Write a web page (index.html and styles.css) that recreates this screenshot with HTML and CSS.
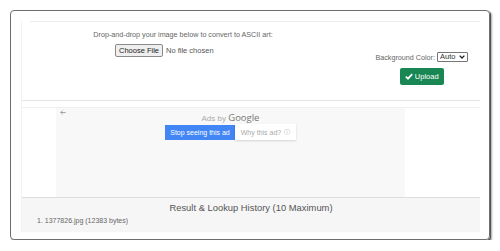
FILE: index.html
```html
<!DOCTYPE html>
<html lang="en">

<head>
    <meta charset="UTF-8">
    <meta name="viewport" content="width=device-width, initial-scale=1.0">
    <title>Image to ASCII</title>
    <link rel="stylesheet" href="styles.css">
</head>

<body>
    <div class="frame">
        <div class="panel">
            <!-- upload form -->
            <section class="upload">
                <div class="upload-left">
                    <p class="hint">Drop-and-drop your image below to convert to ASCII art:</p>
                    <input class="file" type="file">
                </div>
                <div class="upload-right">
                    <label class="bg-color">Background Color:
                        <span class="select-wrap">
                            <select>
                                <option>Auto</option>
                            </select>
                            <svg class="select-arrow" width="6" height="4" viewBox="0 0 6 4"><path d="M0.6 0.6 L3 3 L5.4 0.6" fill="none" stroke="#222" stroke-width="1.3"/></svg>
                        </span>
                    </label>
                    <button class="btn-upload" type="button">
                        <svg width="8" height="7" viewBox="0 0 8 7"><path d="M0.8 3.6 L3 5.7 L7.2 1.2" fill="none" stroke="#fff" stroke-width="1.7"/></svg>
                        Upload
                    </button>
                </div>
            </section>

            <!-- ad slot -->
            <section class="ad-slot">
                <div class="ad-row">
                    <div class="ad">
                        <svg class="ad-back" width="6" height="5" viewBox="0 0 6 5"><path d="M5.6 2.5 H0.8 M2.6 0.6 L0.7 2.5 L2.6 4.4" fill="none" stroke="#999" stroke-width="0.9"/></svg>
                        <div class="ad-by">Ads by <span class="google">Google</span></div>
                        <div class="ad-actions">
                            <span class="ad-stop">Stop seeing this ad</span>
                            <span class="ad-why">Why this ad? <span class="info">&#9432;</span></span>
                        </div>
                    </div>
                </div>
            </section>

            <!-- history -->
            <section class="history">
                <h3>Result &amp; Lookup History (10 Maximum)</h3>
                <ol>
                    <li>1377826.jpg (12383 bytes)</li>
                </ol>
            </section>
        </div>
    </div>
</body>

</html>
```

FILE: styles.css
```css
body,
html {
    margin: 0;
    padding: 0;
    background-color: #ffffff;
    font-family: "Liberation Sans", Arial, sans-serif;
    color: #555;
}

.frame {
    margin: 10px 0 0 10px;
    width: 480px;
    height: 230px;
    box-sizing: border-box;
    border: 1px solid #6e6e6e;
    border-radius: 4px;
    box-shadow: 1px 1px 0 #555, 2px 2px 2px rgba(0, 0, 0, 0.35);
    padding: 10px 9px 7px 10px;
}

.panel {
    height: 100%;
    border-left: 1px solid #f2f2f2;
    display: flex;
    flex-direction: column;
}

.upload {
    margin-left: 8px;
    height: 79px;
    box-sizing: border-box;
    border-top: 1px solid #ececec;
    display: flex;
    justify-content: space-between;
}

.upload-left {
    width: 324px;
    margin-left: -9px;
}

.hint {
    margin: 8px 0 0;
    font-size: 7.2px;
    line-height: 9px;
    text-align: center;
    color: #666;
}

.file {
    margin: 2px 0 0 94px;
    font-size: 7.5px;
    font-family: "Liberation Sans", Arial, sans-serif;
    color: #555;
}

.file::file-selector-button {
    margin-right: 3px;
    padding: 1px 3px;
    font-size: 7.5px;
    font-family: "Liberation Sans", Arial, sans-serif;
    color: #222;
    background-color: #efefef;
    border: 1px solid #8a8a8a;
    border-radius: 2px;
}

.upload-right {
    display: flex;
    flex-direction: column;
    align-items: center;
    padding: 30px 12px 0 0;
}

.bg-color {
    display: flex;
    align-items: center;
    gap: 2px;
    font-size: 7.2px;
    color: #666;
}

.select-wrap {
    position: relative;
    display: inline-block;
}

.select-wrap select {
    appearance: none;
    width: 31px;
    height: 10px;
    padding: 0 0 0 2px;
    font-size: 7.5px;
    line-height: 8px;
    font-family: "Liberation Sans", Arial, sans-serif;
    border: 1px solid #767676;
    border-radius: 1px;
    background-color: #fff;
    color: #333;
}

.select-arrow {
    position: absolute;
    right: 3px;
    top: 3px;
    pointer-events: none;
}

.btn-upload {
    margin-top: 6px;
    width: 44px;
    height: 17px;
    padding: 0;
    border: none;
    border-radius: 2px;
    background-color: #198754;
    color: #fff;
    font-size: 7.5px;
    font-family: "Liberation Sans", Arial, sans-serif;
    display: flex;
    align-items: center;
    justify-content: center;
    gap: 2px;
}

.ad-slot {
    border-top: 1px solid #e4e4e4;
    padding-top: 6px;
}

.ad-row {
    border-top: 1px solid #efefef;
    height: 89px;
}

.ad {
    position: relative;
    margin-left: 34px;
    width: 349px;
    height: 89px;
    background-color: #f8f8f8;
    display: flex;
    flex-direction: column;
    align-items: center;
}

.ad-back {
    position: absolute;
    left: 4px;
    top: 2px;
}

.ad-by {
    margin-top: 3px;
    font-size: 8px;
    color: #aaa;
}

.google {
    font-family: "Open Sans", Arial, sans-serif;
    font-size: 9.5px;
    color: #777;
}

.ad-actions {
    margin-top: 1px;
    display: flex;
    align-items: stretch;
}

.ad-stop {
    background-color: #4285f4;
    color: #fff;
    font-size: 7px;
    width: 70px;
    height: 15px;
    display: flex;
    align-items: center;
    justify-content: center;
}

.ad-why {
    background-color: #fff;
    color: #aaa;
    font-size: 7px;
    width: 61px;
    height: 16px;
    margin-top: -1px;
    display: flex;
    align-items: center;
    justify-content: center;
    box-shadow: 0 1px 2px rgba(0, 0, 0, 0.15);
}

.info {
    margin-left: 3px;
    font-size: 6px;
}

.history {
    flex: 1;
    border-top: 1px solid #dcdcdc;
    background-color: #f6f6f6;
}

.history h3 {
    margin: 4px 0 0;
    font-size: 9.4px;
    line-height: 12px;
    font-weight: normal;
    text-align: center;
    color: #555;
}

.history ol {
    margin: 2px 0 0;
    padding: 0 0 0 15px;
    font-size: 7px;
    line-height: 9px;
    color: #666;
    list-style-position: inside;
}
```
